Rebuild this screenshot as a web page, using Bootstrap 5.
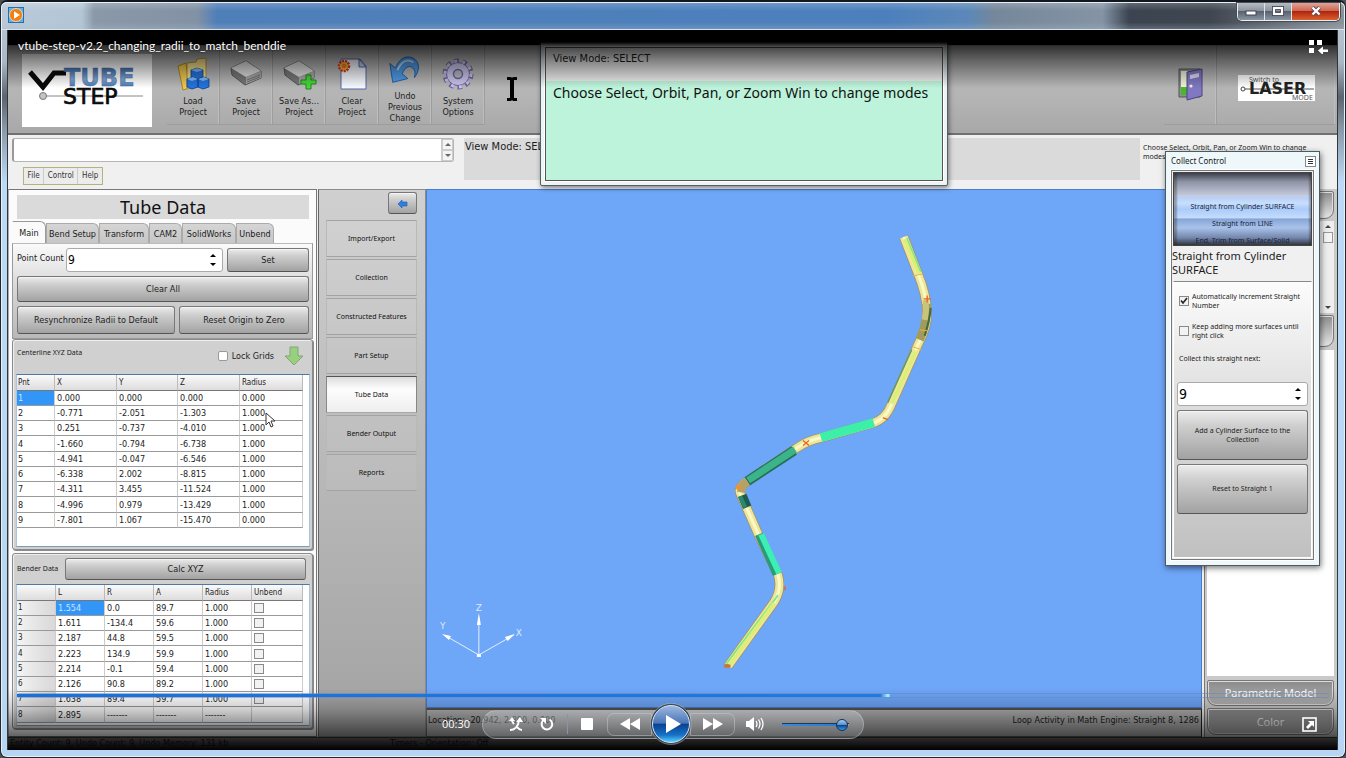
<!DOCTYPE html>
<html lang="en">
<head>
<meta charset="utf-8">
<meta name="viewport" content="width=device-width, initial-scale=1">
<title>vtube-step-v2.2_changing_radii_to_match_benddie</title>
<link rel="stylesheet" href="https://cdn.jsdelivr.net/npm/bootstrap@5.3.0/dist/css/bootstrap.min.css">
<style>
:root{--ui:"DejaVu Sans Condensed","DejaVu Sans",sans-serif;--tiny:"Noto Sans","Open Sans",sans-serif}
body{background:#4c5055;font-family:var(--ui);font-size:9px;line-height:12px;color:#1c1c1c}
button{font-family:inherit;color:inherit}
.frame{min-height:100vh;padding:0 7px 7px 6px;border:1px solid #23272c;border-top:2px solid #14171c;border-radius:7px;
 background:linear-gradient(180deg,#c2ccd6 0,#a9b8c6 60px,#5c646d 95px,#8796a5 125px,#bcd9f5 180px,#b7d5f3 100%);box-shadow:inset 0 0 0 1px #e4f0fa}
.glass{height:28px;margin:0 -6px 0 -5px;padding:4px 0 0 6px;border-radius:5px 5px 0 0;border-top:1px solid #e4f0fa;border-bottom:1px solid #d5e3ee;
 background:linear-gradient(180deg,#ffffff30,#0000 30%,#0000 75%,#b0bcc850),linear-gradient(90deg,#b9c9d8 0,#b3c6d6 80px,#8a99a8 92px,#8292a5 195px,#4f7fb8 215px,#4c80bd 66%,#5c88b8 72%,#75879a 74%,#8494a5 82%,#3b4450 84%,#3f4650 90%,#8c9299 100%)}
.wmp{width:16px;height:16px;display:block}
.winbtns{height:18px;margin:-4px 4px 0 0;border:1px solid #e9eef3;border-top:0;border-radius:0 0 5px 5px;overflow:hidden;box-shadow:0 0 0 1px #444c56}
.winbtns button{border:0;width:27px;border-right:1px solid #e0e4e8;background:linear-gradient(#b6bcc4,#8a929c 48%,#596370 50%,#8b95a0);padding:0 0 2px;display:flex;align-items:center;justify-content:center}
.winbtns .x{width:47px;border:0;background:linear-gradient(#e3a395,#cb6450 48%,#b0260c 50%,#d96030)}
.stage{border:1px solid #30363c;border-width:0 1px;background:#f0f0f0;overflow:hidden}
.strip{height:15px;background:#000}
.ribbon{height:90px;background:linear-gradient(#b9b9b9,#b4b4b4 60%,#a8a8a8);border-bottom:2px solid #707070;padding:0 2px 8px 14px}
.logo{width:130px;height:73px;background:#fff;margin-top:9px}
.rbtns{margin-left:15px}
.rb{width:53px;border:0;border-right:1px solid #9d9d9d;border-bottom:1px solid #9d9d9d;background:none;padding:12px 0 0;line-height:11px;box-shadow:inset -1px 0 #bdbdbd;display:flex;flex-direction:column;align-items:center}
.rb svg{width:36px;height:36px;display:block;flex:none;margin-bottom:3px}
.rb.up{padding-top:9px;line-height:11px}
.rb.up svg{height:34px}
.rb .lasersvg{width:77px;height:26px;margin-top:18px}
.msgrow{height:54px;padding:3px 0 3px 4px}
.inbox{width:442px;height:24px;border:1px solid #b5b5b5;border-left:2px solid #999;background:#fff;border-radius:3px}
.spin{width:12px;background:#f4f4f4;border-left:1px solid #ccc}
.spin span{flex:1;border:1px solid #ccc;display:flex;align-items:center;justify-content:center}
.cmd{border:0;background:none;outline:0;width:100%}
.menubar{border:1px solid #b5b27a;width:80px;height:18px;margin:5px 0 0 11px;background:#ececec;font:8px/16px var(--ui)}
.menubar a{color:#333;text-decoration:none;text-align:center;border-left:1px solid #ccc;flex:1 1 auto}
.menubar a:first-child{border:0}
.vm{width:676px;height:42px;margin-left:10px;background:#dadada;font-size:11px;line-height:17px;padding-left:1px}
.hint{font:7px/9px var(--tiny);padding:5px 20px 0 3px;flex:1}
.leftp{width:309px;background:#fbfbfb;border:1px solid #777;border-left-color:#aaa;padding:5px 3px 4px 3px}
.ttl{margin:0 4px 2px 5px;background:#dadada;font:18px/24px var(--tiny);text-align:center;color:#111}
.tabsx{height:22px;align-items:flex-end}
.tabsx button{border:1px solid #aaa;border-bottom:0;border-radius:0 6px 0 0;background:linear-gradient(#d5d5d5,#c6c6c6);height:20px;padding:0;line-height:18px;font-size:9px}
.tabsx button.on{height:22px;background:#fafafa;border-color:#999 #999 #fafafa #fafafa}
.pane{border:1px solid #999;border-top-color:#bbb;background:linear-gradient(#fafafa,#d5d5d5 50%,#b8b8b8);padding:4px 3px 4px 4px;height:96px}
.gb{border:1px solid #777;border-bottom-color:#555;border-radius:3px;background:linear-gradient(#ececec,#cfcfcf 30%,#a2a2a2);padding:0;box-shadow:inset 0 1px #ffffff80}
.numb{height:24px;border:1px solid #aaa;border-radius:3px;background:#fff}
.numb input{border:0;width:100%;background:none;outline:0;padding:0 0 0 1px;font:12px/20px var(--ui);appearance:textfield;-moz-appearance:textfield}
.numb input::-webkit-inner-spin-button{appearance:none}
.arr{width:12px;display:flex;flex-direction:column;justify-content:space-evenly;margin-right:1px}
.arr svg,.spin svg{width:6px;height:3px;display:block}
.grp{border:1px solid #8a8a8a;border-radius:3px;background:#d0d0d0;box-shadow:inset 1px 1px #eee,1px 1px #8a8a8a;padding:0 2px 2px 3px}
.tinyl{font:7px/10px var(--tiny)}
.tbox{background:#fff;border:1px solid #a8c4e4;border-top-color:#5278a0;border-bottom-color:#7f9ab4}
.tbox table{table-layout:fixed;border-collapse:separate;border-spacing:0;width:286px}
.tbox th{height:16px;padding:0 0 0 2px;font:8px/13px var(--ui);background:linear-gradient(#fafafa,#dedcdc);border-right:1px solid #bbb;border-bottom:1px solid #777}
.tbox td{height:15px;padding:0 0 0 2px;font-size:9px;line-height:14px;border-right:1px solid #ccc;border-bottom:1px solid #999}
.tbox tbody tr:nth-child(4n) td{height:16px}
.tbox tr>:first-child{padding-left:1px}
.tbox .sel{background:#3296f8;color:#cfe4fb}
#bend td:first-child{background:linear-gradient(90deg,#f4f4f4,#d9d7d7);font-size:8px}
#bend input,.ck{appearance:none;width:10px;height:10px;border:1px solid #8a8a8a;background:#f2f2f2;display:block;margin:0;flex:none}
.ck:checked{background:#f2f2f2 url("data:image/svg+xml,%3Csvg xmlns='http://www.w3.org/2000/svg' viewBox='0 0 8 8'%3E%3Cpath d='M1 3.500l2 2.500 4-5' fill='none' stroke='%23222' stroke-width='1.600'/%3E%3C/svg%3E") center/8px no-repeat}
.ck.round{border-radius:2px;background:#fff;border-color:#999}
.navp{width:108px;background:linear-gradient(#d0d0d0,#a2a2a2);border:1px solid #8c8c8c;border-left-color:#666;padding:2px 8px 0 7px;margin-left:1px}
.navp .back{width:29px;height:22px;padding:0;margin-bottom:6px}
.navp .nb{height:37px;border:1px solid #a3a3a3;border-left-color:#b9b9b9;border-right-color:#b9b9b9;background:#ffffff10;font:7px/10px var(--tiny);padding:0;color:#111}
.navp .nb.on{background:linear-gradient(#ddd,#fdfdfd 35%,#eee);border-color:#555 #888 #aaa}
.viewp{background:#6ea6f8;flex:1;border:1px solid #4a7dc8;min-height:0}
.viewp svg{position:absolute;inset:0;width:100%;height:100%}
.status{height:29px;background:#b4b4b4;border:1px solid #666;border-top:2px solid #555;border-right-color:#222;line-height:20px;padding:0 2px 0 1px}
.rightp{width:133px;background:#c9c9c9;border-left:1px solid #777;margin-left:2px;padding:2px 3px 2px 2px}
.silver{border:1px solid #777;border-radius:2px 2px 9px 9px;background:linear-gradient(#8d8d8d,#e6e6e6);box-shadow:inset 0 0 0 1px #ddd}
.silver.dim{background:linear-gradient(#8a8a8a,#b4b4b4);color:#fff;font:11px/20px var(--tiny)}
.foot{height:13px;background:#a0a0a0;border-top:1px solid #444;font-size:9px;line-height:11px}
.notice{left:532px;top:0;width:408px;height:156px;background:#eef3f4;border:1px solid #555f66;border-radius:2px;box-shadow:1px 2px 5px #0007;padding:16px 4px 4px 4px;z-index:2}
.notice>div{border:1px solid #555;outline:1px solid #fff}
.notice .nhead{font-size:11px;line-height:22px;height:33px;padding-left:7px;background:#f0f0f0}
.notice .g{background:#bdf3da;font:14px/24px var(--tiny);padding-left:7px;color:#111}
.collect{right:17px;top:121px;width:155px;height:415px;background:#eef8fb;border:1px solid #4e5a62;box-shadow:1px 2px 6px #0008;z-index:2;padding:0 5px 5px}
.collect .cap{height:18px;font:8px/18px var(--tiny)}
.collect .bodyx{background:#f0f0f0;border:1px solid #777;flex:1;outline:1px solid #fff}
.picker{height:74px;margin:1px;border:1px solid #444;overflow:hidden;position:relative;text-align:center;font:7px/17px var(--tiny);color:#16243c;padding-top:25px;background:linear-gradient(#3c3f4b 0,#8d92a4 12%,#c9d0e2 33%,#b6d0fa 34%,#c9defc 42%,#aacbf9 50%,#c4dbfc 62%,#86a5d6 64%,#a9c2ea 76%,#7486ac 90%,#31343d 100%)}
.picker:after{content:"";position:absolute;inset:0;background:linear-gradient(90deg,#2225 0,#2225 2px,#2220 4px,#2220 134px,#2225 136px)}
.inner{margin:0 1px 1px;border:1px solid #fff;border-top:1px solid #888;background:linear-gradient(#fcfcfc,#ddd 45%,#c0c0c0);flex:1;padding:0 3px}
.shade-top{left:0;right:0;top:0;height:58px;background:linear-gradient(#000f 0,#000f 12px,#000b 16px,#0007 30px,#0000);z-index:3;pointer-events:none}
.shade-bot{left:0;right:0;bottom:0;height:62px;background:linear-gradient(#0000 0,#0002 15px,#0003 22px,#0009 48px,#000b 50px,#000f 62px);z-index:3;pointer-events:none}
.vtitle{left:10px;right:8px;top:7px;z-index:4;color:#fff;font:12px/18px Lato,sans-serif;height:18px;text-shadow:0 0 2px #000}
.player{left:9px;right:8px;bottom:6px;z-index:4;color:#fff}
.player input[type=range]{appearance:none;display:block;margin:0;background:none}
.seek{width:100%;height:5px;border:1px solid #5f87c088;border-width:1px 0;border-radius:2px}
.seek::-webkit-slider-runnable-track{height:3px;background:linear-gradient(90deg,#1d6fd6 0,#1f7ae4 65.8%,#b8f4ff 66.4%,#4aa0ee 66.6%,#0000 66.7%)}
.seek::-webkit-slider-thumb{appearance:none;width:1px;height:1px}
.ctl{display:grid;grid-template-columns:1fr auto 1fr;margin-top:6px;height:40px;align-items:center}
.ctl button{border:0;background:none;padding:0;display:block}
.ctl svg{display:block}
.time{font:11px/18px "Open Sans",sans-serif;text-align:right;padding-right:12px}
.pill{width:382px;height:29px;border-radius:15px;background:linear-gradient(#c9ced470,#8c909460);border:1px solid #e0e4e850;padding:0 14px 0 26px}
.side{border:1px solid #d0d4d870;height:23px;width:45px;display:flex;align-items:center;justify-content:center}
.vol{width:67px;height:14px}
.vol::-webkit-slider-runnable-track{height:3px;background:linear-gradient(90deg,#3f88d8,#2a78d0 90%,#999 91%);border-top:1px solid #23374f}
.vol::-webkit-slider-thumb{appearance:none;width:12px;height:12px;border-radius:50%;margin-top:-5px;border:1px solid #12335c;background:linear-gradient(#a8cff2,#5c90d0 45%,#0d3c80 50%,#2fa0e8)}
.ptr{left:257px;top:382px;width:10px;height:16px;z-index:2}
</style>
</head>
<body>
<div class="frame d-flex flex-column">
 <header class="glass d-flex justify-content-between align-items-start">
  <svg class="wmp" viewBox="0 0 16 16"><rect x=".5" y=".5" width="15" height="15" fill="#5fb3ea" stroke="#2a6da8"/><circle cx="8" cy="8" r="6.5" fill="#f57f0c" stroke="#fff" stroke-width=".6"/><path d="M6 4.2v7.6L12 8z" fill="#fff"/></svg>
  <div class="winbtns d-flex">
   <button aria-label="Minimize"><svg width="12" height="10"><rect x="1" y="5" width="10" height="4" fill="#fff" stroke="#445" /></svg></button>
   <button aria-label="Maximize"><svg width="12" height="10"><rect x="2" y="2" width="8" height="6" fill="none" stroke="#445" stroke-width="4"/><rect x="2" y="2" width="8" height="6" fill="none" stroke="#fff" stroke-width="2.2"/></svg></button>
   <button class="x" aria-label="Close"><svg width="12" height="10"><path d="M2.5 1.5l7 7m0-7l-7 7" stroke="#545" stroke-width="4"/><path d="M2.5 1.5l7 7m0-7l-7 7" stroke="#fff" stroke-width="2.4"/></svg></button>
  </div>
 </header>

 <main class="stage position-relative flex-grow-1 d-flex flex-column">
  <div class="strip"></div>
  <div class="ribbon d-flex">
   <svg class="logo flex-shrink-0" viewBox="0 0 130 73">
    <defs><linearGradient id="bl" x2="0" y2="1"><stop offset="0" stop-color="#2f5c9c"/><stop offset=".55" stop-color="#7fa6d6"/><stop offset="1" stop-color="#2d5a98"/></linearGradient></defs>
    <path d="M8 18l13 15L32 19H44" fill="none" stroke="#0a0a0a" stroke-width="5"/>
    <text x="42" y="32" font-family="DejaVu Sans" font-weight="bold" font-size="24" fill="url(#bl)" stroke="#3c6cab" stroke-width=".5">TUBE</text>
    <path d="M22 42H121" stroke="#888"/><circle cx="21" cy="42" r="3.500" fill="#c4c4c4" stroke="#777"/>
    <text x="41" y="50" font-family="DejaVu Sans" font-size="22" fill="#0a0a0a" stroke="#0a0a0a" stroke-width=".7">STEP</text>
   </svg>
   <div class="rbtns d-flex flex-grow-1">
    <button class="rb"><svg viewBox="0 0 36 36"><path d="M3 9l8-3 3 25-6 2z" fill="#f0c850" stroke="#a98420"/><path d="M12 6l9-1 1-3 9-1v27l-19 4z" fill="#f7e08a" stroke="#b09030"/><g fill="#2374dc" stroke="#0d3f94" stroke-width=".8"><path d="M16 13l6-2 6 2v7l-6 2-6-2zM12 22l6-2 5 2v8l-6 2-5-2zM23 22l6-2 5 2v8l-6 2-5-2z"/></g><path d="M16 13l6-2 6 2-6 2zM12 22l6-2 5 2-6 2zM23 22l6-2 5 2-6 2z" fill="#7db8f8"/></svg><span>Load<br>Project</span></button>
    <button class="rb"><svg viewBox="0 0 36 36"><path d="M3 11L18 4l15 10v7L17 28 4 18z" fill="#777" stroke="#555"/><path d="M3 11L18 4l15 10-15 6z" fill="#dedede"/><path d="M18 20v7l15-6v-7z" fill="#a5a5a5"/><path d="M19 23l13-5M19 25l13-5" stroke="#666" stroke-width=".8"/></svg><span>Save<br>Project</span></button>
    <button class="rb"><svg viewBox="0 0 36 36"><path d="M3 11L18 4l15 10v7L17 28 4 18z" fill="#777" stroke="#555"/><path d="M3 11L18 4l15 10-15 6z" fill="#dedede"/><path d="M18 20v7l15-6v-7z" fill="#a5a5a5"/><path d="M25 18h5v5h5v4h-5v5h-5v-5h-5v-4h5z" fill="#48d63a" stroke="#1d8a18"/></svg><span>Save As...<br>Project</span></button>
    <button class="rb"><svg viewBox="0 0 36 36"><path d="M7 2h19l6 7v23H7z" fill="#f6f9ff" stroke="#5666a8"/><path d="M25 2v8h7z" fill="#b8cbe8" stroke="#5666a8"/><circle cx="10" cy="9" r="5" fill="#f8c050" stroke="#d83a10" stroke-width="2.500" stroke-dasharray="2 1"/><circle cx="10" cy="9" r="2.500" fill="#f07a20"/></svg><span>Clear<br>Project</span></button>
    <button class="rb up"><svg viewBox="0 0 36 36"><path d="M2 10l3 20 16-4-6-5c3-7 7-9 10-7 4 2 4 6 3 11 6-8 6-17-2-21C18 1 11 6 8 15z" fill="#4f9be6" stroke="#1e5da8"/><path d="M10 17c4-9 10-13 17-8" fill="none" stroke="#b6dcfb" stroke-width="2"/></svg><span>Undo<br>Previous<br>Change</span></button>
    <button class="rb"><svg viewBox="0 0 36 36"><circle cx="18" cy="17" r="13" fill="none" stroke="#6a62a0" stroke-width="5" stroke-dasharray="4.500 3.660"/><circle cx="18" cy="17" r="11.500" fill="#c9c4ea" stroke="#6a62a0"/><circle cx="18" cy="17" r="13" fill="none" stroke="#c9c4ea" stroke-width="3" stroke-dasharray="3 5.160"/><circle cx="18" cy="17" r="4.500" fill="#b9b9bd" stroke="#6a62a0" stroke-width="1.500"/></svg><span>System<br>Options</span></button>
    <svg width="53" height="82" viewBox="0 0 53 82" aria-hidden="true"><path d="M22 32h4l1 1 1-1h4v3h-3v18h3v3h-4l-1-1-1 1h-4v-3h3V35h-3z" fill="#000"/></svg>
    <button class="rb ms-auto" aria-label="Exit"><svg class="mt-2" viewBox="0 0 36 36"><path d="M7 4h21v28H7z" fill="#8d8f9a" stroke="#555"/><path d="M9 6h8v24H9z" fill="#f2f4d8"/><path d="M9 22h8v8H9z" fill="#48b828"/><path d="M15 7l15-3v27l-15 4z" fill="#8078c0" stroke="#4a4488"/><path d="M18 10l9-2v4l-9 2z" fill="#d8d6f4"/><circle cx="19" cy="21" r="1.600" fill="#eee"/></svg></button>
    <button class="rb border-end-0" style="width:118px" aria-label="Switch to LASER mode"><svg class="lasersvg" viewBox="0 0 77 26"><path fill="#fff" d="M0 0h77v26H0z"/><text x="11" y="7" font-size="7" font-family="Noto Sans" fill="#555">Switch to</text><path d="M4 14h72" stroke="#555"/><circle cx="5" cy="14" r="2" fill="#fff" stroke="#444"/><text x="11" y="19" font-size="16" font-weight="bold" font-family="DejaVu Sans" fill="#222">LASER</text><text x="54" y="25" font-size="7" font-family="Noto Sans" fill="#555">MODE</text></svg></button>
   </div>
  </div>

  <div class="msgrow d-flex">
   <div>
    <div class="inbox d-flex"><input class="cmd" aria-label="Messages"><div class="spin d-flex flex-column"><span><svg><path d="M0 3h6L3 0z" fill="#666"/></svg></span><span><svg><path d="M0 0h6L3 3z" fill="#666"/></svg></span></div></div>
    <nav class="menubar d-flex"><a href="#">File</a><a href="#">Control</a><a href="#">Help</a></nav>
   </div>
   <div class="vm">View Mode: SELECT</div>
   <div class="hint">Choose Select, Orbit, Pan, or Zoom Win to change<br>modes</div>
  </div>

  <div class="d-flex flex-grow-1">
   <section class="leftp flex-shrink-0">
    <h1 class="ttl">Tube Data</h1>
    <div class="tabsx d-flex"><button class="on" style="width:34px">Main</button><button style="width:53px">Bend Setup</button><button style="width:50px">Transform</button><button style="width:33px">CAM2</button><button style="width:54px">SolidWorks</button><button style="width:38px">Unbend</button></div>
    <div class="pane d-flex flex-column gap-1">
     <div class="d-flex"><label for="pc" style="width:49px;line-height:20px">Point Count</label><div class="numb d-flex" style="width:157px"><input id="pc" type="number" value="9"><span class="arr"><svg><path d="M0 3h6L3 0z"/></svg><svg><path d="M0 0h6L3 3z"/></svg></span></div><button class="gb flex-grow-1 ms-1">Set</button></div>
     <button class="gb" style="height:28px">Clear All</button>
     <div class="d-flex gap-1 flex-shrink-0" style="height:28px"><button class="gb" style="width:158px">Resynchronize Radii to Default</button><button class="gb flex-grow-1">Reset Origin to Zero</button></div>
    </div>
    <div class="grp">
     <div class="d-flex" style="height:34px;padding-bottom:2px"><span class="tinyl" style="padding:8px 0 0 1px">Centerline XYZ Data</span><label class="d-flex align-items-center ms-auto gap-1"><input class="ck round" type="checkbox">Lock Grids</label><button class="border-0 bg-transparent p-0" style="margin:0 6px 0 10px" aria-label="Calculate down"><svg width="20" height="20" viewBox="0 0 20 20"><path d="M6 1h8v9h5l-9 9-9-9h5z" fill="#98cf80" stroke="#80a870"/></svg></button></div>
     <div class="tbox" style="height:173px"><table id="xyz"><colgroup><col style="width:38px"><col style="width:62px"><col style="width:61px"><col style="width:62px"><col></colgroup><thead><tr><th>Pnt</th><th>X</th><th>Y</th><th>Z</th><th>Radius</th></tr></thead><tbody></tbody></table></div>
    </div>
    <div class="grp" style="margin-top:3px">
     <div class="d-flex align-items-center" style="height:30px"><span class="tinyl" style="width:49px;padding-left:1px">Bender Data</span><button class="gb flex-grow-1 me-1" style="height:22px">Calc XYZ</button></div>
     <div class="tbox" style="height:142px"><table id="bend"><colgroup><col style="width:39px"><col style="width:49px"><col style="width:49px"><col style="width:49px"><col style="width:49px"><col></colgroup><thead><tr><th></th><th>L</th><th>R</th><th>A</th><th>Radius</th><th>Unbend</th></tr></thead><tbody></tbody></table></div>
    </div>
   </section>

   <nav class="navp flex-shrink-0 d-flex flex-column">
    <button class="gb back align-self-end" aria-label="Back"><svg width="10" height="8"><path d="M0 4l4-4v2h5v4H4v2z" fill="#2e7fe0" stroke="#1a5cb0" stroke-width=".6"/></svg></button>
    <div class="d-grid" style="gap:2px">
     <button class="nb">Import/Export</button><button class="nb">Collection</button><button class="nb">Constructed Features</button><button class="nb">Part Setup</button><button class="nb on">Tube Data</button><button class="nb">Bender Output</button><button class="nb">Reports</button>
    </div>
   </nav>

   <section class="flex-grow-1 d-flex flex-column">
    <div class="viewp position-relative">
     <svg viewBox="427 190 776 518" preserveAspectRatio="xMidYMid meet" fill="none">
      <defs>
       <path id="tp" d="M905 237L919 273Q930 300 928 320C926 334 921 340 917 350L893 404Q887 420 873 424L823 438Q808 441 797 449L748 482Q737 489 742 496L760 537L779 576Q783 590 775 603L729 667"/>
      </defs>
      <use href="#tp" stroke="#a98f5c" stroke-width="9.500"/><use href="#tp" stroke="#ebe69a" stroke-width="8"/><use href="#tp" stroke="#faf8c4" stroke-width="3"/>
      <path d="M908 238L922 272M779 596L727 665" stroke="#7ee88a" stroke-width="1.800"/>
      <path d="M906 239L920 274M917 351L893 404M775 604L730 666" stroke="#dcee74" stroke-width="3.500"/>
      <path d="M913 350L889 403" stroke="#5a9a60" stroke-width="1.300"/>
      <path d="M928 304Q929 322 921 340" stroke="#a39c58" stroke-width="8.500"/><path d="M927 300Q928 310 926 320" stroke="#c9c47c" stroke-width="6"/><path d="M932 308Q931 320 926 336" stroke="#3f6b40" stroke-width="2"/>
      <path d="M875 423L822 438" stroke="#3cf0a8" stroke-width="9"/>
      <path d="M795 451L748 482" stroke="#256f5a" stroke-width="10"/><path d="M796 450L749 481" stroke="#3bb489" stroke-width="7"/>
      <path d="M748 482l-5 4-1 7" stroke="#b8a064" stroke-width="8"/><circle cx="739" cy="488" r="2.500" fill="#f09030"/>
      <path d="M743 496l5 12" stroke="#1d5c50" stroke-width="9"/><path d="M741 497l5 11" stroke="#2c8a6c" stroke-width="4"/>
      <path d="M760 535L778 575" stroke="#2a9a7a" stroke-width="9"/><path d="M762 535L780 574" stroke="#3cf0b4" stroke-width="6"/>
      <path d="M925 299h7m-3.500-3.500v7M804 441l6 5m0-5l-6 5M786 587v4M884 418l5 2" stroke="#f06020" stroke-width="1.300"/>
      <path d="M914 276l10-2M914 347l9 3M921 330l8 1" stroke="#f0b040"/><ellipse cx="728" cy="667" rx="3.500" ry="2" fill="#c87830"/>
      <g stroke="#e4f0ff"><path d="M479 656V618M479 656L446 637M479 656L514 636"/></g>
      <path d="M479 614l-2 12h4zM442 635l9 2-2 4zM515 635l-10 3 3 4zM477 655h4v3h-4z" fill="#fff"/>
      <g fill="#dbeaff" font-family="DejaVu Sans" font-size="9"><text x="476" y="612">Z</text><text x="440" y="630">Y</text><text x="516" y="637">X</text></g>
     </svg>
    </div>
    <div class="status d-flex justify-content-between"><span>Location: -20.942, 2.800, 0.000</span><span>Loop Activity in Math Engine: Straight 8, 1286</span></div>
   </section>

   <aside class="rightp flex-shrink-0 d-flex flex-column">
    <div class="silver" style="height:28px"></div>
    <div class="d-flex bg-light" style="height:92px;margin:2px 0"><div class="flex-grow-1 bg-white"></div><div class="d-flex flex-column align-items-center" style="width:13px;padding:4px 0;background:#eee"><svg width="6" height="3"><path d="M0 3h6L3 0z" fill="#444"/></svg><div style="width:10px;height:11px;margin-top:4px;border:1px solid #999;background:#f4f4f4"></div><svg class="mt-auto" width="6" height="3"><path d="M0 0h6L3 3z" fill="#444"/></svg></div></div>
    <div class="silver" style="height:32px;margin-bottom:3px"></div>
    <div class="bg-white flex-grow-1"></div>
    <button class="silver dim" style="height:26px;margin-top:4px">Parametric Model</button>
    <button class="silver dim" style="height:27px;margin-top:2px">Color</button>
   </aside>
  </div>
  <div class="foot d-flex"><span style="width:382px;padding-left:2px">Entity Count: 9, Undo Count: 9, Undo Memory: 131 kb</span><span>Timers - Orientation: Off</span></div>

  <svg class="ptr position-absolute" viewBox="0 0 10 16"><path d="M1 1v12l3-3 2 5 2-1-2-5h4z" fill="#fff" stroke="#333"/></svg>

  <div class="notice position-absolute d-flex"><div class="flex-grow-1 d-flex flex-column"><div class="nhead">View Mode: SELECT</div><div class="g flex-grow-1">Choose Select, Orbit, Pan, or Zoom Win to change modes</div></div></div>

  <div class="collect position-absolute d-flex flex-column">
   <div class="cap d-flex justify-content-between align-items-center"><span>Collect Control</span><button class="p-0 bg-white" style="width:11px;height:11px;border:1px solid #888;margin-right:-2px" aria-label="Close"><svg width="5" height="5" class="d-block m-auto"><path d="M0 .5h5M0 2.500h5M0 4.500h5" stroke="#333"/></svg></button></div>
   <div class="bodyx d-flex flex-column">
    <div class="picker"><div>Straight from Cylinder SURFACE</div><div>Straight from LINE</div><div>End, Trim from Surface/Solid</div></div>
    <div style="font:11px/14px var(--tiny);padding:2px 0 4px 0">Straight from Cylinder SURFACE</div>
    <div class="inner d-flex flex-column">
     <label class="d-flex align-items-center tinyl" style="gap:3px;margin:10px 0 0 2px;line-height:9px"><input class="ck" type="checkbox" checked>Automatically increment Straight Number</label>
     <label class="d-flex align-items-center tinyl" style="gap:3px;margin:12px 0 0 2px;line-height:9px"><input class="ck" type="checkbox"><span>Keep adding more surfaces until<br>right click</span></label>
     <label class="tinyl" for="nx" style="margin:14px 0 0 2px">Collect this straight next:</label>
     <div class="numb d-flex" style="margin:18px 0 4px"><input id="nx" type="number" value="9" style="font-size:14px"><span class="arr"><svg><path d="M0 3h6L3 0z"/></svg><svg><path d="M0 0h6L3 3z"/></svg></span></div>
     <button class="gb tinyl" style="height:50px;line-height:9px">Add a Cylinder Surface to the<br>Collection</button>
     <button class="gb tinyl" style="height:50px;margin-top:4px">Reset to Straight 1</button>
    </div>
   </div>
  </div>

  <div class="shade-top position-absolute"></div>
  <div class="shade-bot position-absolute"></div>
  <div class="vtitle position-absolute d-flex justify-content-between"><span>vtube-step-v2.2_changing_radii_to_match_benddie</span>
   <button class="border-0 bg-transparent p-0 lh-1" aria-label="Switch to library"><svg width="20" height="16"><path d="M0 2h5v5H0zM8 2h5v5H8zM0 10h5v5H0zM9 12.500l5-4v3h5v2.500h-5v3z" fill="#fff"/></svg></button></div>

  <div class="player position-absolute">
   <input class="seek" type="range" aria-label="Seek" value="66">
   <div class="ctl">
    <div class="time">00:30</div>
    <div class="pill d-flex align-items-center">
     <button aria-label="Shuffle"><svg width="14" height="14" viewBox="0 0 14 14"><path d="M1 13c4 0 8-3 9-9M13 13C10 13 9 11 8 10M5 7C4 6 3 5 3 3" fill="none" stroke="#fff" stroke-width="2"/><path d="M0 4l3-4 3 4zM7 5l4-5 3 5z" fill="#fff"/></svg></button>
     <button aria-label="Repeat" style="margin-left:17px"><svg width="14" height="14" viewBox="0 0 14 14"><path d="M9.500 2.500A5.300 5.300 0 1 1 4 2.700" fill="none" stroke="#fff" stroke-width="2"/><path d="M0 1h6v6z" fill="#fff"/></svg></button>
     <span style="border-left:1px solid #8a94a8;height:20px;margin:0 13px"></span>
     <button aria-label="Stop"><svg width="12" height="12"><rect width="12" height="12" rx="1" fill="#fff"/></svg></button>
     <div class="side" style="margin-left:14px;border-radius:7px 0 0 7px"><button aria-label="Rewind"><svg width="20" height="12"><path d="M10 0v12L0 6zM20 0v12L10 6z" fill="#fff"/></svg></button></div>
     <button aria-label="Play" style="margin:0 -2px"><svg width="42" height="42" viewBox="0 0 42 42"><defs><linearGradient id="pb" x2="0" y2="1"><stop offset="0" stop-color="#9db9e0"/><stop offset=".48" stop-color="#4a76b8"/><stop offset=".5" stop-color="#0b3f8c"/><stop offset=".8" stop-color="#1673c8"/><stop offset="1" stop-color="#5fd8ff"/></linearGradient></defs><circle cx="21" cy="21" r="20.500" fill="#3a4450" stroke="#ffffff50"/><circle cx="21" cy="21" r="18.500" fill="url(#pb)" stroke="#cfe4fa"/><path d="M16 12v18l15-9z" fill="#fff"/></svg></button>
     <div class="side" style="border-radius:0 7px 7px 0"><button aria-label="Fast forward"><svg width="20" height="12"><path d="M0 0v12l10-6zM10 0v12l10-6z" fill="#fff"/></svg></button></div>
     <button aria-label="Mute" style="margin-left:11px"><svg width="18" height="14" viewBox="0 0 18 14"><path d="M0 4h3l5-4v14l-5-4H0z" fill="#fff"/><path d="M10 4q2 3 0 6M12.500 2.500q3 4.500 0 9M15 1q4 6 0 12" stroke="#fff" stroke-width="1.300" fill="none"/></svg></button>
     <input class="vol ms-auto" type="range" aria-label="Volume" value="98">
    </div>
    <button class="ms-auto" style="margin-right:12px" aria-label="Full screen"><svg width="15" height="15"><rect x="1" y="1" width="13" height="13" fill="none" stroke="#fff" stroke-width="1.600"/><path d="M6 4h6v6l-2-2-4 4-2-2 4-4z" fill="#fff"/></svg></button>
   </div>
  </div>
 </main>
</div>
<script>
const xyz=[["0.000","0.000","0.000","0.000"],["-0.771","-2.051","-1.303","1.000"],["0.251","-0.737","-4.010","1.000"],["-1.660","-0.794","-6.738","1.000"],["-4.941","-0.047","-6.546","1.000"],["-6.338","2.002","-8.815","1.000"],["-4.311","3.455","-11.524","1.000"],["-4.996","0.979","-13.429","1.000"],["-7.801","1.067","-15.470","0.000"]];
document.querySelector('#xyz tbody').innerHTML=xyz.map((r,i)=>`<tr><td${i?'':' class="sel"'}>${i+1}</td>${r.map(v=>`<td>${v}</td>`).join('')}</tr>`).join('');
const bend=[["1.554","0.0","89.7"],["1.611","-134.4","59.6"],["2.187","44.8","59.5"],["2.223","134.9","59.9"],["2.214","-0.1","59.4"],["2.126","90.8","89.2"],["1.638","89.4","59.7"],["2.895","-------","-------"]];
document.querySelector('#bend tbody').innerHTML=bend.map((r,i)=>`<tr><td>${i+1}</td><td${i?'':' class="sel"'}>${r[0]}</td><td>${r[1]}</td><td>${r[2]}</td><td>${i<7?'1.000':'-------'}</td><td>${i<7?`<input type="checkbox" aria-label="Unbend ${i+1}">`:''}</td></tr>`).join('');
</script>
<script src="https://cdn.jsdelivr.net/npm/bootstrap@5.3.0/dist/js/bootstrap.bundle.min.js"></script>
</body>
</html>
